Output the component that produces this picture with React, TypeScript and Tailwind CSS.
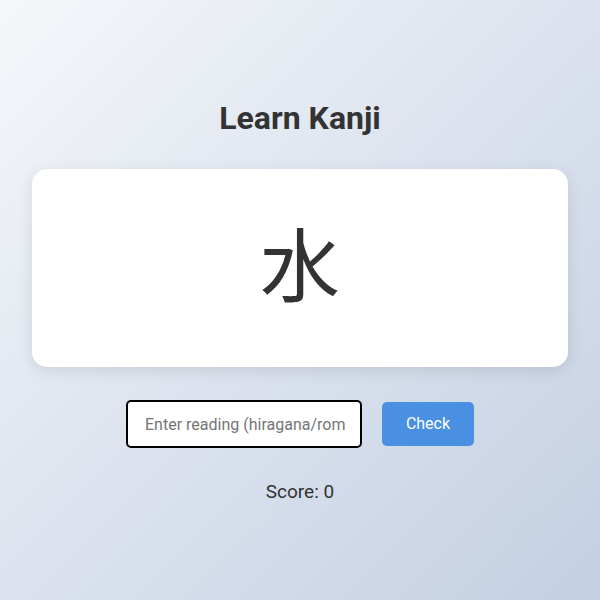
export default function App() {
  return (
    <div
      className="w-full h-[600px] flex flex-col items-center justify-start pt-[100px] px-8 bg-gradient-to-br from-[#f5f7fa] to-[#c3cfe2] text-[#333]"
      style={{ fontFamily: "Roboto, 'Noto Sans CJK JP', sans-serif" }}
    >
      <h1 className="text-[32px] font-bold leading-[37px] text-[#333]">Learn Kanji</h1>
      <div className="mt-[32px] w-full h-[198px] shrink-0 bg-white rounded-[15px] shadow-[0_4px_15px_rgba(0,0,0,0.1)] flex items-center justify-center">
        <span className="text-[80px] leading-none mb-[16px] text-[#333]" style={{ fontFamily: "'Noto Sans CJK JP', sans-serif" }}>水</span>
      </div>
      <div className="mt-[33px] flex items-center gap-5">
        <input
          autoFocus
          placeholder="Enter reading (hiragana/romaji)"
          className="w-[236px] h-[48px] pl-[17px] pr-[14px] text-[16px] bg-white border-2 border-black rounded-[5px] outline-none placeholder:text-[#757575] text-[#333]"
          style={{ fontFamily: "Roboto, sans-serif" }}
        />
        <button className="h-[44px] w-[92px] bg-[#4a90e2] text-white text-[16px] rounded-[5px]" style={{ fontFamily: "Roboto, sans-serif" }}>
          Check
        </button>
      </div>
      <div className="mt-[30px] text-[19px] leading-[28px] text-[#333]">Score: 0</div>
    </div>
  );
}
